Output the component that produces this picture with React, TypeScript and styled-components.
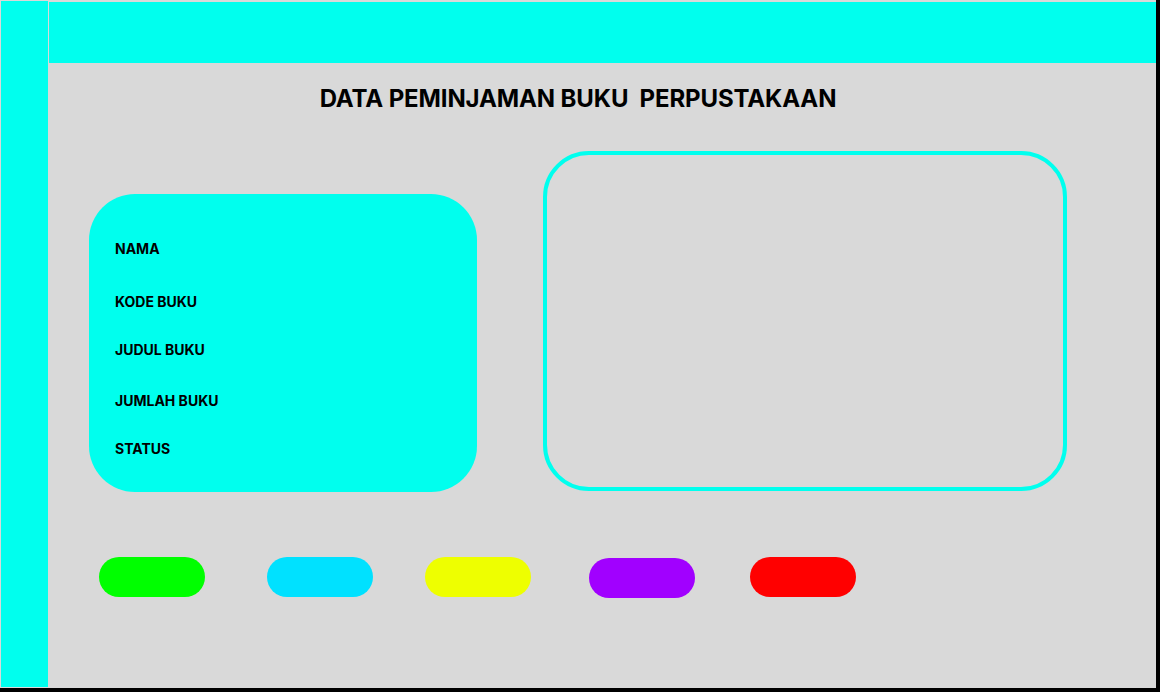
import React from "react";
import styled, { createGlobalStyle } from "styled-components";

const Global = createGlobalStyle`
  html, body { margin: 0; padding: 0; background: #000; }
  body { font-family: Inter, "Noto Sans", "Liberation Sans", sans-serif; }
  #root { width: 1160px; height: 692px; overflow: hidden; }
`;

const CYAN = "#00FFEE";

const Frame = styled.div`
  width: 1156px;
  height: 688px;
  background: #d9d9d9;
  display: grid;
  grid-template-columns: 49px 1fr;
  box-sizing: border-box;
  padding-top: 1px;
`;

const Sidebar = styled.aside`
  background: ${CYAN};
  margin-left: 1px;
  width: 47px;
  height: 686px;
`;

const Main = styled.main`
  display: flex;
  flex-direction: column;
  min-width: 0;
`;

const Header = styled.header`
  height: 61px;
  background: ${CYAN};
  margin-top: 1px;
`;

const Content = styled.section`
  display: flex;
  flex-direction: column;
  padding: 21px 0 0 40px;
`;

const Title = styled.h1`
  margin: 0 49px 0 -40px;
  font-size: 24px;
  line-height: 29px;
  font-weight: 700;
  letter-spacing: -0.12px;
  color: #000;
  text-align: center;
  white-space: pre;
`;

const CardsRow = styled.div`
  display: flex;
  align-items: flex-start;
  margin-top: 38px;
`;

const InfoCard = styled.div`
  box-sizing: border-box;
  width: 388px;
  height: 298px;
  margin-top: 43px;
  background: ${CYAN};
  border-radius: 46px;
  padding: 46px 0 0 26px;
  display: flex;
  flex-direction: column;
`;

const Label = styled.div<{ $top: number }>`
  margin-top: ${(p) => p.$top}px;
  font-size: 14px;
  line-height: 17px;
  font-weight: 700;
  color: #000;
`;

const Preview = styled.div`
  box-sizing: border-box;
  width: 524px;
  height: 340px;
  margin-left: 66px;
  border: 4px solid ${CYAN};
  border-radius: 46px;
`;

const ButtonRow = styled.div`
  display: flex;
  align-items: flex-start;
  margin-top: 65px;
  padding-left: 10px;
`;

const Pill = styled.button<{ $bg: string; $ml: number; $dy?: number }>`
  width: 106px;
  height: 40px;
  margin-left: ${(p) => p.$ml}px;
  margin-top: ${(p) => p.$dy ?? 0}px;
  border: none;
  border-radius: 20px;
  background: ${(p) => p.$bg};
  padding: 0;
  cursor: pointer;
`;

const labels: [string, number][] = [
  ["NAMA", 0],
  ["KODE BUKU", 36],
  ["JUDUL BUKU", 31],
  ["JUMLAH BUKU", 34],
  ["STATUS", 31],
];

const buttons: { bg: string; ml: number; dy?: number }[] = [
  { bg: "#00FF00", ml: 0 },
  { bg: "#00E1FF", ml: 62 },
  { bg: "#EEFF00", ml: 52 },
  { bg: "#A100FF", ml: 58, dy: 1 },
  { bg: "#FF0000", ml: 55 },
];

export default function App() {
  return (
    <>
      <Global />
      <Frame>
        <Sidebar />
        <Main>
          <Header />
          <Content>
            <Title>{"DATA PEMINJAMAN BUKU  PERPUSTAKAAN"}</Title>
            <CardsRow>
              <InfoCard>
                {labels.map(([t, m]) => (
                  <Label key={t} $top={m}>
                    {t}
                  </Label>
                ))}
              </InfoCard>
              <Preview />
            </CardsRow>
            <ButtonRow>
              {buttons.map((b, i) => (
                <Pill key={i} $bg={b.bg} $ml={b.ml} $dy={b.dy} />
              ))}
            </ButtonRow>
          </Content>
        </Main>
      </Frame>
    </>
  );
}
